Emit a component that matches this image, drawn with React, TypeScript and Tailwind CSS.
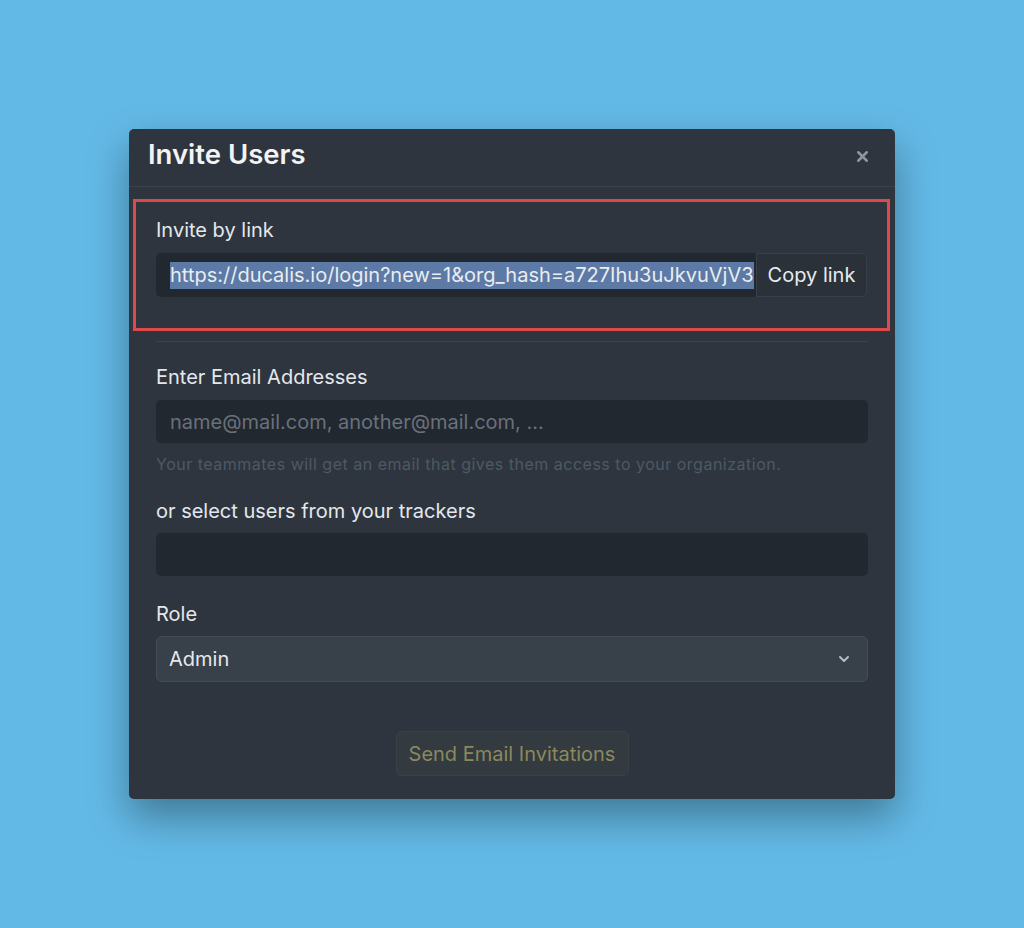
import { ChevronDown, X } from "lucide-react";

const font = { fontFamily: "Inter, 'Noto Sans', sans-serif" };

function Label({ children, className = "" }: { children: React.ReactNode; className?: string }) {
  return <div className={`text-[20px] leading-6 text-[#e4e8ec] ${className}`}>{children}</div>;
}

export default function App() {
  const link = "https://ducalis.io/login?new=1&org_hash=a727Ihu3uJkvuVjV3";

  return (
    <div className="min-h-[928px] w-full bg-[#63b9e6] pt-[129px]" style={font}>
      <div className="mx-auto w-[766px] rounded-[5px] bg-[#2e353e] shadow-[0_18px_40px_rgba(0,0,0,0.35)]">
        {/* header */}
        <div className="flex h-[58px] items-center justify-between border-b border-[#3a424c] pb-[5px] pl-[19px] pr-[24px]">
          <h2 className="text-[27.5px] font-semibold text-[#f1f3f5]">Invite Users</h2>
          <X className="mt-[2px] h-[17px] w-[17px] text-[#8f969e]" strokeWidth={3.5} />
        </div>

        <div className="pt-[12px] pb-[23px]">
          {/* invite by link (highlighted) */}
          <div className="ml-[4px] mr-[5px] border-[3px] border-[#de4a4c] px-[20px] pt-[16px] pb-[31px]">
            <Label>Invite by link</Label>
            <div className="mt-[11px] flex h-[44px]">
              <div className="flex min-w-0 flex-1 items-center overflow-hidden whitespace-nowrap rounded-l-[5px] bg-[#22282f] pl-[14px]">
                <span className="bg-[#5c7aa5] text-[20px] leading-[27px] text-[#e8edf2]">{link}</span>
              </div>
              <button className="flex w-[111px] shrink-0 items-center justify-center rounded-r-[5px] border border-[#383f48] bg-[#2b3139] text-[20px] text-[#e8ebee]">
                Copy link
              </button>
            </div>
          </div>

          <div className="px-[27px]">
            <div className="mt-[10px] h-px bg-[#3b434d]" />

            <Label className="mt-[23px]">Enter Email Addresses</Label>
            <div className="mt-[11px] flex h-[43px] items-center rounded-[5px] bg-[#22282f] px-[14px] text-[20px] text-[#69717b]">
              name@mail.com, another@mail.com, ...
            </div>
            <div className="mt-[11px] text-[16px] leading-5 tracking-[0.5px] text-[#4f5964]">
              Your teammates will get an email that gives them access to your organization.
            </div>

            <Label className="mt-[25px]">or select users from your trackers</Label>
            <div className="mt-[10px] h-[43px] rounded-[5px] bg-[#22282f]" />

            <Label className="mt-[26px]">Role</Label>
            <div className="mt-[10px] flex h-[46px] items-center justify-between rounded-[6px] border border-[#454d57] bg-[#38404a] pl-[12px] pr-[15px]">
              <span className="text-[20px] text-[#e6e9ed]">Admin</span>
              <ChevronDown className="h-[16px] w-[16px] text-[#b5bcc4]" strokeWidth={3} />
            </div>

            <div className="mt-[49px] flex justify-center">
              <button className="h-[45px] w-[233px] rounded-[6px] border border-[#3b4247] bg-[#333a40] text-[20px] text-[#8b895c]">
                Send Email Invitations
              </button>
            </div>
          </div>
        </div>
      </div>
    </div>
  );
}
